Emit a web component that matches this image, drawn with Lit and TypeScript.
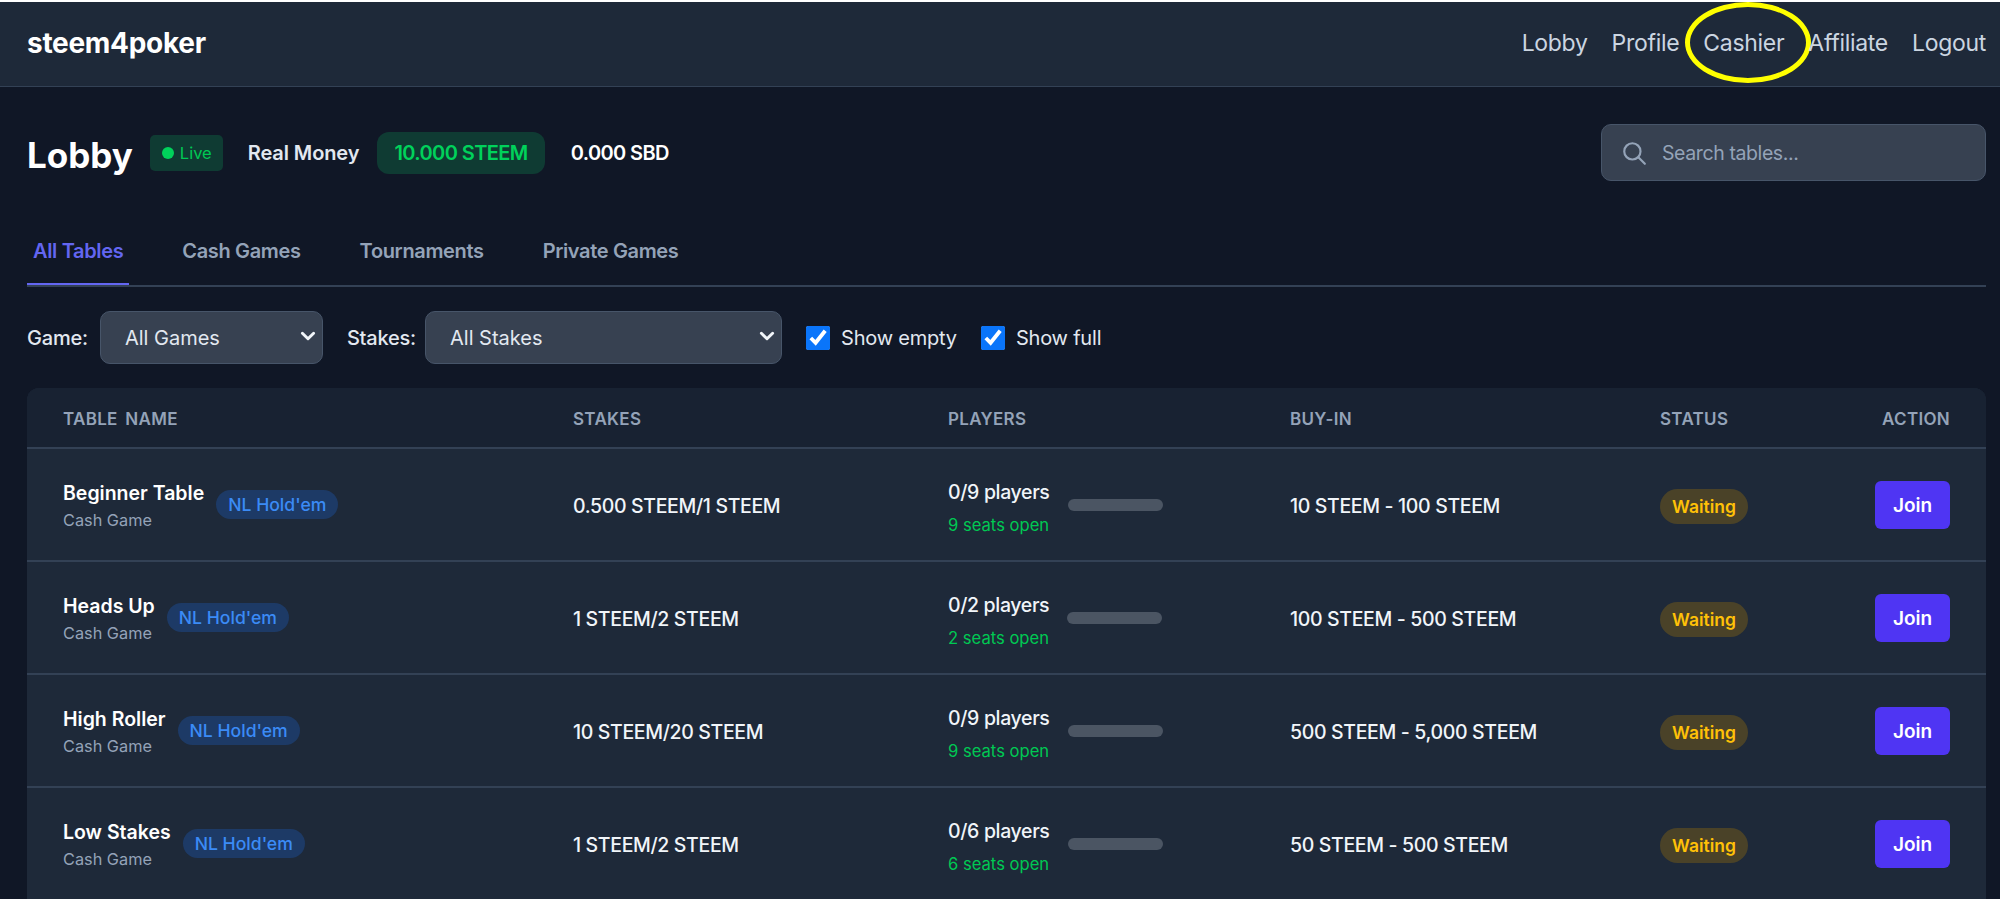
import { LitElement, css, html } from "lit";
import { customElement } from "lit/decorators.js";

const navLinks = ["Lobby", "Profile", "Cashier", "Affiliate", "Logout"];
const tabs = ["All Tables", "Cash Games", "Tournaments", "Private Games"];

const tables = [
  { name: "Beginner Table", stakes: "0.500 STEEM/1 STEEM", players: "0/9 players", seats: "9 seats open", buyIn: "10 STEEM - 100 STEEM" },
  { name: "Heads Up", stakes: "1 STEEM/2 STEEM", players: "0/2 players", seats: "2 seats open", buyIn: "100 STEEM - 500 STEEM" },
  { name: "High Roller", stakes: "10 STEEM/20 STEEM", players: "0/9 players", seats: "9 seats open", buyIn: "500 STEEM - 5,000 STEEM" },
  { name: "Low Stakes", stakes: "1 STEEM/2 STEEM", players: "0/6 players", seats: "6 seats open", buyIn: "50 STEEM - 500 STEEM" },
];

const chevron = html`
  <svg class="chevron" viewBox="0 0 16 16" fill="none" stroke="currentColor" stroke-width="2.6" stroke-linecap="round" stroke-linejoin="round">
    <path d="M3 5.5 8 10.5 13 5.5"></path>
  </svg>
`;

@customElement("app-root")
export class AppRoot extends LitElement {
  static styles = css`
    :host {
      display: block;
      height: 899px;
      overflow: hidden;
      background: #101726;
      color: #f1f5f9;
      font-family: Inter, "Liberation Sans", sans-serif;
      border-top: 2px solid #ffffff;
      box-sizing: border-box;
    }
    .topbar {
      height: 85px;
      box-sizing: border-box;
      display: flex;
      align-items: center;
      justify-content: space-between;
      padding: 0 14px 2px 27px;
      background: #1e2939;
      border-bottom: 1px solid #334155;
    }
    .logo {
      font-size: 28px;
      font-weight: 700;
      color: #ffffff;
      letter-spacing: -0.3px;
    }
    .topbar nav {
      display: flex;
      gap: 24px;
    }
    .topbar a {
      font-size: 23px;
      color: #cbd5e1;
      letter-spacing: -0.3px;
      position: relative;
    }
    .circled::after {
      content: "";
      position: absolute;
      left: -18px;
      right: -27px;
      top: -27px;
      bottom: -26px;
      border: 5px solid #ffff00;
      border-radius: 50%;
    }
    main {
      padding: 0 14px 0 27px;
    }
    .lobby-head {
      height: 131px;
      display: flex;
      align-items: center;
    }
    h1 {
      margin: 4px 17px 0 0;
      font-size: 35px;
      font-weight: 700;
      color: #ffffff;
    }
    .live {
      display: flex;
      align-items: center;
      gap: 6px;
      height: 36px;
      padding: 0 11px 0 12px;
      border-radius: 5px;
      background: #0f3b33;
      color: #00c853;
      font-size: 16.5px;
    }
    .live i {
      width: 12px;
      height: 12px;
      border-radius: 50%;
      background: #00d25b;
    }
    .real {
      margin-left: 25px;
      font-size: 20px;
      font-weight: 600;
      letter-spacing: -0.1px;
      color: #e2e8f0;
    }
    .steem {
      margin-left: 18px;
      height: 42px;
      padding: 0 17px;
      display: flex;
      align-items: center;
      border-radius: 12px;
      background: #0f3b33;
      color: #00d25b;
      font-size: 20px;
      font-weight: 600;
      letter-spacing: -0.6px;
    }
    .sbd {
      margin-left: 26px;
      font-size: 20px;
      font-weight: 600;
      letter-spacing: -0.6px;
      color: #ffffff;
    }
    .search {
      margin-left: auto;
      width: 385px;
      height: 57px;
      box-sizing: border-box;
      display: flex;
      align-items: center;
      gap: 13px;
      padding-left: 19px;
      border-radius: 10px;
      background: #374151;
      border: 1px solid #475569;
      color: #94a3b8;
    }
    .search svg {
      width: 26px;
      height: 26px;
      flex: none;
    }
    .search input {
      flex: 1;
      min-width: 0;
      border: 0;
      outline: 0;
      background: none;
      font: inherit;
      font-size: 19.5px;
      letter-spacing: -0.4px;
      color: #e2e8f0;
    }
    .search input::placeholder {
      color: #94a3b8;
      opacity: 1;
    }
    .tabs {
      display: flex;
      height: 67px;
      gap: 47px;
      border-bottom: 2px solid #334155;
    }
    .tab {
      box-sizing: border-box;
      height: 67px;
      padding: 0 6px;
      display: flex;
      align-items: center;
      border-bottom: 2px solid transparent;
      font-size: 20px;
      font-weight: 600;
      letter-spacing: -0.35px;
      color: #94a3b8;
    }
    .tab.active {
      color: #6366f1;
      border-bottom-color: #6366f1;
    }
    .filters {
      display: flex;
      align-items: center;
      height: 53px;
      margin-top: 24px;
      font-size: 20px;
      font-weight: 500;
      letter-spacing: -0.2px;
      color: #e2e8f0;
    }
    .filters label {
      margin-right: 12px;
    }
    .filters label.stakes-label {
      margin-right: 9px;
    }
    .select {
      position: relative;
      margin-right: 24px;
      color: #f1f5f9;
    }
    .select select {
      appearance: none;
      display: block;
      height: 53px;
      box-sizing: border-box;
      padding: 0 24px;
      border-radius: 10px;
      border: 1px solid #475569;
      background: #374151;
      color: #e2e8f0;
      font: inherit;
      font-weight: 400;
    }
    .games select { width: 223px; }
    .stakes select { width: 357px; }
    .chevron {
      position: absolute;
      right: 6px;
      top: 16px;
      width: 18px;
      height: 18px;
      pointer-events: none;
    }
    .check {
      display: flex;
      align-items: center;
      gap: 11px;
      margin-right: 24px;
      font-weight: 400;
    }
    .check input {
      width: 24px;
      height: 24px;
      margin: 0;
      accent-color: #0a75fa;
    }
    .table {
      margin-top: 24px;
      border-radius: 12px 12px 0 0;
      overflow: hidden;
      background: #1e2939;
    }
    .row {
      display: grid;
      grid-template-columns: 510px 375px 342px 370px 1fr auto;
      align-items: center;
      padding: 2px 36px 0;
      height: 113px;
      box-sizing: border-box;
      border-bottom: 2px solid #334155;
      font-size: 19.5px;
      font-weight: 500;
      letter-spacing: -0.35px;
      color: #f1f5f9;
    }
    .row.head {
      height: 61px;
      background: #182232;
      font-size: 17px;
      font-weight: 600;
      letter-spacing: 0.3px;
      word-spacing: 3px;
      color: #94a3b8;
    }
    .name-cell {
      display: flex;
      align-items: center;
      gap: 12px;
    }
    .name {
      font-size: 19.5px;
      font-weight: 600;
      letter-spacing: 0;
      color: #ffffff;
    }
    .sub {
      margin-top: 5px;
      font-size: 16.3px;
      font-weight: 400;
      letter-spacing: 0;
      color: #94a3b8;
    }
    .tag {
      margin-top: -2px;
      padding: 4px 12px;
      border-radius: 15px;
      background: #1d3a66;
      color: #3b8bf6;
      font-size: 17.6px;
      font-weight: 500;
      letter-spacing: 0;
    }
    .players {
      display: flex;
      align-items: center;
      gap: 18px;
    }
    .players-text {
      padding-top: 4px;
    }
    .seats {
      margin-top: 11px;
      font-size: 16.6px;
      font-weight: 400;
      letter-spacing: 0;
      color: #00c853;
    }
    .bar {
      width: 95px;
      height: 12px;
      margin-top: -2px;
      border-radius: 6px;
      background: #4b5563;
    }
    .status-cell {
      margin-top: 2px;
    }
    .status {
      display: inline-block;
      padding: 7px 12px;
      border-radius: 18px;
      background: #4a4228;
      color: #ffc107;
      font-size: 17.5px;
      font-weight: 600;
      letter-spacing: 0;
    }
    .join {
      width: 75px;
      height: 48px;
      margin-top: -2px;
      padding: 2px 0 0;
      border: 0;
      border-radius: 6px;
      background: #4f35f3;
      color: #ffffff;
      font: inherit;
      font-size: 19px;
      font-weight: 600;
      letter-spacing: 0;
    }
  `;

  render() {
    return html`
      <header class="topbar">
        <div class="logo">steem4poker</div>
        <nav>
          ${navLinks.map(
            (l) => html`<a class=${l === "Cashier" ? "circled" : ""}>${l}</a>`,
          )}
        </nav>
      </header>
      <main>
        <div class="lobby-head">
          <h1>Lobby</h1>
          <span class="live"><i></i>Live</span>
          <span class="real">Real Money</span>
          <span class="steem">10.000 STEEM</span>
          <span class="sbd">0.000 SBD</span>
          <div class="search">
            <svg viewBox="0 0 24 24" fill="none" stroke="currentColor" stroke-width="2" stroke-linecap="round">
              <circle cx="10.5" cy="10.5" r="7.5"></circle>
              <path d="M16 16l6 6"></path>
            </svg>
            <input placeholder="Search tables..." />
          </div>
        </div>
        <div class="tabs">
          ${tabs.map(
            (t, i) => html`<div class="tab ${i === 0 ? "active" : ""}">${t}</div>`,
          )}
        </div>
        <div class="filters">
          <label>Game:</label>
          <div class="select games">
            <select><option>All Games</option></select>
            ${chevron}
          </div>
          <label class="stakes-label">Stakes:</label>
          <div class="select stakes">
            <select><option>All Stakes</option></select>
            ${chevron}
          </div>
          <div class="check"><input type="checkbox" checked />Show empty</div>
          <div class="check"><input type="checkbox" checked />Show full</div>
        </div>
        <div class="table">
          <div class="row head">
            <div>TABLE NAME</div>
            <div>STAKES</div>
            <div>PLAYERS</div>
            <div>BUY-IN</div>
            <div>STATUS</div>
            <div>ACTION</div>
          </div>
          ${tables.map(
            (t) => html`
              <div class="row">
                <div class="name-cell">
                  <div>
                    <div class="name">${t.name}</div>
                    <div class="sub">Cash Game</div>
                  </div>
                  <span class="tag">NL Hold'em</span>
                </div>
                <div>${t.stakes}</div>
                <div class="players">
                  <div class="players-text">
                    <div>${t.players}</div>
                    <div class="seats">${t.seats}</div>
                  </div>
                  <div class="bar"></div>
                </div>
                <div>${t.buyIn}</div>
                <div class="status-cell"><span class="status">Waiting</span></div>
                <button class="join">Join</button>
              </div>
            `,
          )}
        </div>
      </main>
    `;
  }
}
